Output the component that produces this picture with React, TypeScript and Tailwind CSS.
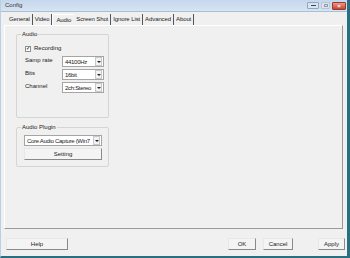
import React from "react";

const font = { fontFamily: '"Liberation Sans", Arial, sans-serif' };

const Select = ({ value, w }: { value: string; w: string }) => (
  <div className={`flex items-center h-[11px] bg-white border border-[#a5a5a5] ${w}`}>
    <span className="flex-1 pl-[2px] text-[6px] tracking-[-0.3px] leading-none text-[#222] whitespace-nowrap overflow-hidden">
      {value}
    </span>
    <span className="w-[7px] h-[9px] mr-[1px] flex items-center justify-center bg-[#f2f2f2] border border-[#c8c8c8]">
      <span className="w-0 h-0 border-l-[2px] border-r-[2px] border-t-[2px] border-l-transparent border-r-transparent border-t-[#222]" />
    </span>
  </div>
);

const Button = ({ label, w }: { label: string; w: string }) => (
  <div
    className={`h-[12px] flex items-center justify-center bg-[#f4f4f4] border border-[#e8e8e8] border-r-[#8a8a8a] border-b-[#8a8a8a] text-[6px] text-[#222] ${w}`}
  >
    {label}
  </div>
);

const Group = ({
  title,
  children,
  h,
}: {
  title: string;
  children: React.ReactNode;
  h: string;
}) => (
  <div className={`relative w-[93px] border border-[#d5d5d5] rounded-[2px] ${h}`}>
    <span className="absolute -top-[4px] left-[4px] px-[1px] bg-[#f0f0f0] text-[6px] leading-none text-[#222]">
      {title}
    </span>
    {children}
  </div>
);

export default function App() {
  const tabs = ["General", "Video", "Audio", "Screen Shot", "Ignore List", "Advanced", "About"];
  return (
    <div
      style={font}
      className="w-[350px] h-[258px] flex flex-col bg-[#f0f0f0] border-r-[3px] border-b-[2px] border-l border-[#2a6f7f] border-l-[#b9cfe5] overflow-hidden"
    >
      {/* title bar */}
      <div className="h-[12px] flex items-center justify-between bg-gradient-to-b from-[#c4d7ec] to-[#d7e4f2] border-b border-[#a9bfd6] pl-[4px] pr-[1px]">
        <span className="text-[6px] text-[#333]">Config</span>
        <div className="flex items-center gap-[2px]">
          <div className="w-[12px] h-[7px] rounded-[1px] border border-[#8da6c2] bg-[#d8e4f1] flex items-center justify-center">
            <span className="w-[5px] h-[1px] bg-[#444]" />
          </div>
          <div className="w-[9px] h-[7px] rounded-[1px] border border-[#b5c6d9] bg-[#dbe5f0] flex items-center justify-center">
            <span className="w-[4px] h-[3px] border border-[#999]" />
          </div>
          <div className="w-[14px] h-[8px] rounded-[1px] border border-[#9a3a2e] bg-gradient-to-b from-[#e89a8a] to-[#c7412f] flex items-center justify-center text-white text-[6px] leading-none font-bold">
            ×
          </div>
        </div>
      </div>

      {/* tabs */}
      <div className="flex items-end h-[13px] pl-[6px] pt-[2px]">
        {tabs.map((t) => (
          <div
            key={t}
            className={`h-[11px] flex items-center px-[2px] text-[6px] tracking-[-0.1px] text-[#222] ${
              t === "Audio"
                ? "bg-[#f0f0f0] border-t border-l border-[#ffffff] px-[3px]"
                : "border-r border-[#555]"
            }`}
          >
            {t}
          </div>
        ))}
      </div>

      {/* panel */}
      <div className="flex-1 ml-[3px] mr-[4px] border border-[#ffffff] border-r-[#9a9a9a] border-b-[#9a9a9a] flex flex-col gap-[9px] pt-[8px] pl-[11px]">
        <Group title="Audio" h="h-[84px]">
          <div className="flex flex-col pt-[8px] pl-[8px] gap-[2px] text-[6px] text-[#222]">
            <div className="flex items-center gap-[3px] h-[11px]">
              <span className="w-[6px] h-[6px] bg-white border border-[#8e8e8e] flex items-center justify-center text-[5px] leading-none font-bold">
                ✓
              </span>
              <span>Recording</span>
            </div>
            {[
              ["Samp rate", "44100Hz"],
              ["Bits", "16bit"],
              ["Channel", "2ch:Stereo"],
            ].map(([l, v]) => (
              <div key={l} className="flex items-center">
                <span className="w-[37px] -mt-[3px]">{l}</span>
                <Select value={v} w="w-[42px]" />
              </div>
            ))}
          </div>
        </Group>
        <Group title="Audio Plugin" h="h-[40px]">
          <div className="flex flex-col pt-[7px] pl-[7px] gap-[2px]">
            <Select value="Core Audio Capture (Win7" w="w-[78px]" />
            <Button label="Setting" w="w-[78px]" />
          </div>
        </Group>
      </div>

      {/* bottom buttons */}
      <div className="h-[27px] flex items-center pl-[5px] pr-[2px] pt-[3px]">
        <Button label="Help" w="w-[62px]" />
        <div className="flex-1" />
        <Button label="OK" w="w-[28px]" />
        <div className="w-[7px]" />
        <Button label="Cancel" w="w-[30px]" />
        <div className="w-[25px]" />
        <Button label="Apply" w="w-[27px]" />
      </div>
    </div>
  );
}
